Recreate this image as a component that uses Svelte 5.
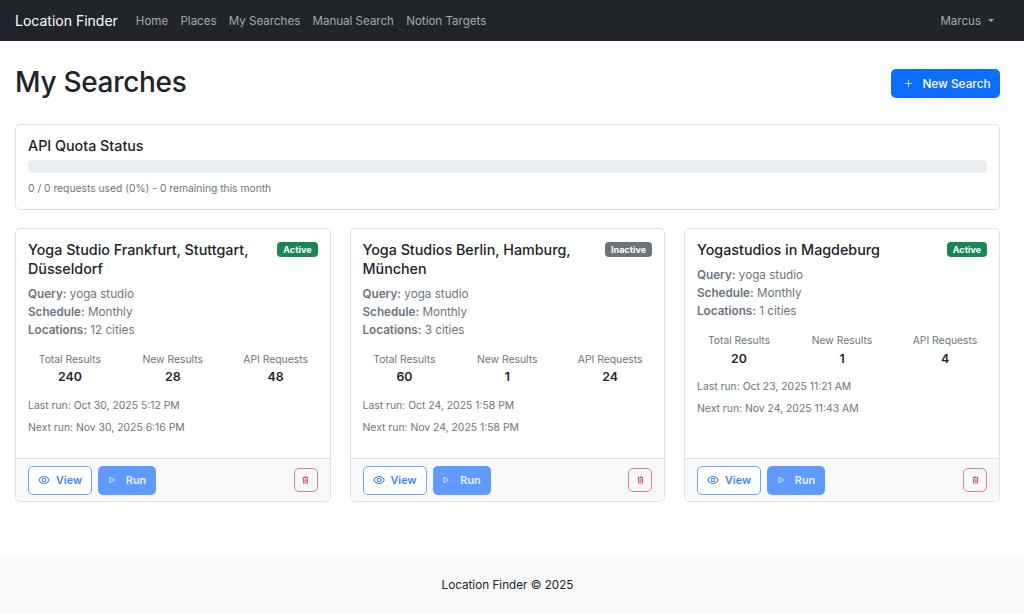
<script>
  const links = ["Home", "Places", "My Searches", "Manual Search", "Notion Targets"];

  const searches = [
    { name: "Yoga Studio Frankfurt, Stuttgart, Düsseldorf", active: true, cities: "12 cities", total: 240, fresh: 28, api: 48, last: "Oct 30, 2025 5:12 PM", next: "Nov 30, 2025 6:16 PM" },
    { name: "Yoga Studios Berlin, Hamburg, München", active: false, cities: "3 cities", total: 60, fresh: 1, api: 24, last: "Oct 24, 2025 1:58 PM", next: "Nov 24, 2025 1:58 PM" },
    { name: "Yogastudios in Magdeburg", active: true, cities: "1 cities", total: 20, fresh: 1, api: 4, last: "Oct 23, 2025 11:21 AM", next: "Nov 24, 2025 11:43 AM" }
  ];
</script>

<nav class="navbar">
  <span class="brand">Location Finder</span>
  <div class="nav-links">
    {#each links as link}
      <span class="nav-link">{link}</span>
    {/each}
  </div>
  <span class="user">Marcus <i class="caret"></i></span>
</nav>

<main class="container">
  <header class="page-head">
    <h1>My Searches</h1>
    <button class="btn btn-primary new">
      <svg width="9" height="9" viewBox="0 0 10 10"><path d="M5 1v8M1 5h8" stroke="currentColor" stroke-width="0.8" fill="none" /></svg>
      New Search
    </button>
  </header>

  <section class="card quota">
    <h2>API Quota Status</h2>
    <div class="progress"></div>
    <p class="muted">0 / 0 requests used (0%) - 0 remaining this month</p>
  </section>

  <section class="grid">
    {#each searches as s}
      <article class="card search">
        <div class="body">
          <div class="title-row">
            <h3>{s.name}</h3>
            <span class="badge" class:inactive={!s.active}>{s.active ? "Active" : "Inactive"}</span>
          </div>
          <div class="meta">
            <div><b>Query:</b> yoga studio</div>
            <div><b>Schedule:</b> Monthly</div>
            <div><b>Locations:</b> {s.cities}</div>
          </div>
          <div class="stats">
            <div><span>Total Results</span><b>{s.total}</b></div>
            <div><span>New Results</span><b>{s.fresh}</b></div>
            <div><span>API Requests</span><b>{s.api}</b></div>
          </div>
          <div class="runs">
            <div>Last run: {s.last}</div>
            <div>Next run: {s.next}</div>
          </div>
        </div>
        <div class="card-footer">
          <button class="btn btn-outline">
            <svg width="12" height="12" viewBox="0 0 16 16" fill="none" stroke="currentColor" stroke-width="1.4"><path d="M1 8s2.6-4.6 7-4.6S15 8 15 8s-2.6 4.6-7 4.6S1 8 1 8z" /><circle cx="8" cy="8" r="2.4" /></svg>
            View
          </button>
          <button class="btn btn-run">
            <svg width="8" height="8" viewBox="0 0 10 10" fill="none" stroke="currentColor" stroke-width="1"><path d="M2.5 1.5v7l5.5-3.5z" /></svg>
            Run
          </button>
          <button class="btn btn-danger">
            <svg width="7" height="8" viewBox="0 0 12 14" fill="none" stroke="currentColor" stroke-width="1.4"><path d="M1 3h10M4.5 3V1.5h3V3M2.5 3v9.5h7V3M5 5.5v5M7 5.5v5" /></svg>
          </button>
        </div>
      </article>
    {/each}
  </section>
</main>

<footer class="footer">Location Finder © 2025</footer>

<style>
  :global(body) {
    font-family: Inter, "Liberation Sans", sans-serif;
    color: #212529;
    background: #fff;
  }
  .navbar {
    height: 41px;
    box-sizing: border-box;
    background: #212529;
    display: flex;
    align-items: center;
    padding: 0 30px 0 15px;
  }
  .brand {
    color: #fff;
    font-size: 14px;
    margin-right: 18px;
  }
  .nav-links {
    display: flex;
    gap: 12.3px;
    flex: 1;
  }
  .nav-link,
  .user {
    color: rgba(255, 255, 255, 0.6);
    font-size: 11.55px;
  }
  .user {
    display: flex;
    align-items: center;
  }
  .caret {
    width: 0;
    height: 0;
    margin-left: 7px;
    border-left: 3.5px solid transparent;
    border-right: 3.5px solid transparent;
    border-top: 3.5px solid rgba(255, 255, 255, 0.6);
  }
  .container {
    padding: 0 24px 55px 15px;
  }
  .page-head {
    display: flex;
    justify-content: space-between;
    align-items: center;
    padding: 24px 0 23px;
    height: 83px;
    box-sizing: border-box;
  }
  h1 {
    margin: 0 0 2px;
    font-size: 28px;
    font-weight: 500;
    line-height: 35px;
    letter-spacing: -0.3px;
  }
  .btn {
    font-family: inherit;
    font-size: 11.8px;
    font-weight: 500;
    border-radius: 5px;
    display: inline-flex;
    align-items: center;
    justify-content: center;
    box-sizing: border-box;
    border: 1px solid transparent;
    padding: 0;
  }
  .btn-primary {
    background: #0d6efd;
    color: #fff;
  }
  .new {
    width: 109px;
    height: 29px;
    gap: 9px;
    padding: 1px 0 0 4px;
  }
  .card {
    background: #fff;
    border: 1px solid #dfe1e4;
    border-radius: 5px;
    box-sizing: border-box;
  }
  .quota {
    height: 86px;
    padding: 12px;
  }
  h2 {
    margin: 0 0 5px;
    font-size: 14.3px;
    font-weight: 500;
    line-height: 18px;
  }
  .progress {
    height: 13px;
    background: #e9ecef;
    border-radius: 5px;
  }
  .muted {
    margin: 8px 0 0;
    font-size: 10.3px;
    line-height: 14px;
    color: #6c757d;
  }
  .grid {
    display: grid;
    grid-template-columns: 315.5px 315.5px 316px;
    gap: 19px;
    margin-top: 18px;
  }
  .search {
    height: 274px;
    display: flex;
    flex-direction: column;
  }
  .body {
    flex: 1;
    padding: 12px;
  }
  .title-row {
    display: flex;
    justify-content: space-between;
    align-items: flex-start;
    gap: 12px;
  }
  h3 {
    margin: 0;
    font-size: 14.3px;
    font-weight: 500;
    line-height: 18.5px;
  }
  .badge {
    flex: none;
    margin-top: 1px;
    background: #198754;
    color: #fff;
    font-size: 9px;
    font-weight: 700;
    line-height: 9px;
    padding: 3px 6px;
    border-radius: 4px;
  }
  .badge.inactive {
    background: #6c757d;
  }
  .meta {
    margin-top: 6.5px;
    font-size: 11.7px;
    line-height: 18px;
    color: #6c757d;
  }
  .meta b {
    font-weight: 600;
  }
  .stats {
    display: grid;
    grid-template-columns: repeat(3, 1fr);
    margin: 13px -9.5px 0;
    text-align: center;
  }
  .stats span {
    display: block;
    font-size: 10.35px;
    line-height: 14px;
    color: #6c757d;
  }
  .stats b {
    display: block;
    font-size: 12.3px;
    font-weight: 600;
    line-height: 18px;
    margin-top: 2.5px;
  }
  .runs {
    margin-top: 12.5px;
    font-size: 10.4px;
    line-height: 14px;
    color: #6c757d;
  }
  .runs div + div {
    margin-top: 8px;
  }
  .card-footer {
    height: 43px;
    box-sizing: border-box;
    border-top: 1px solid #dfe1e4;
    background: #f8f9fb;
    border-radius: 0 0 5px 5px;
    display: flex;
    align-items: center;
    padding: 0 12px;
    gap: 6px;
  }
  .btn-outline,
  .btn-run {
    height: 29px;
    font-size: 10.8px;
    font-weight: 600;
  }
  .btn-outline {
    width: 64px;
    gap: 6px;
    background: #fff;
    color: #3d85f5;
    border: 1.5px solid #6ea8fe;
  }
  .btn-run {
    width: 58px;
    gap: 10px;
    background: #5f9afc;
    color: #e8f0ff;
  }
  .btn-danger {
    margin-left: auto;
    width: 24px;
    height: 24px;
    background: transparent;
    color: #dc3545;
    border-color: #e0808a;
  }
  .footer {
    height: 56px;
    box-sizing: border-box;
    padding: 0 9px 1px 0;
    background: #f8f9fb;
    display: flex;
    align-items: center;
    justify-content: center;
    font-size: 11.7px;
    color: #212529;
  }
</style>
